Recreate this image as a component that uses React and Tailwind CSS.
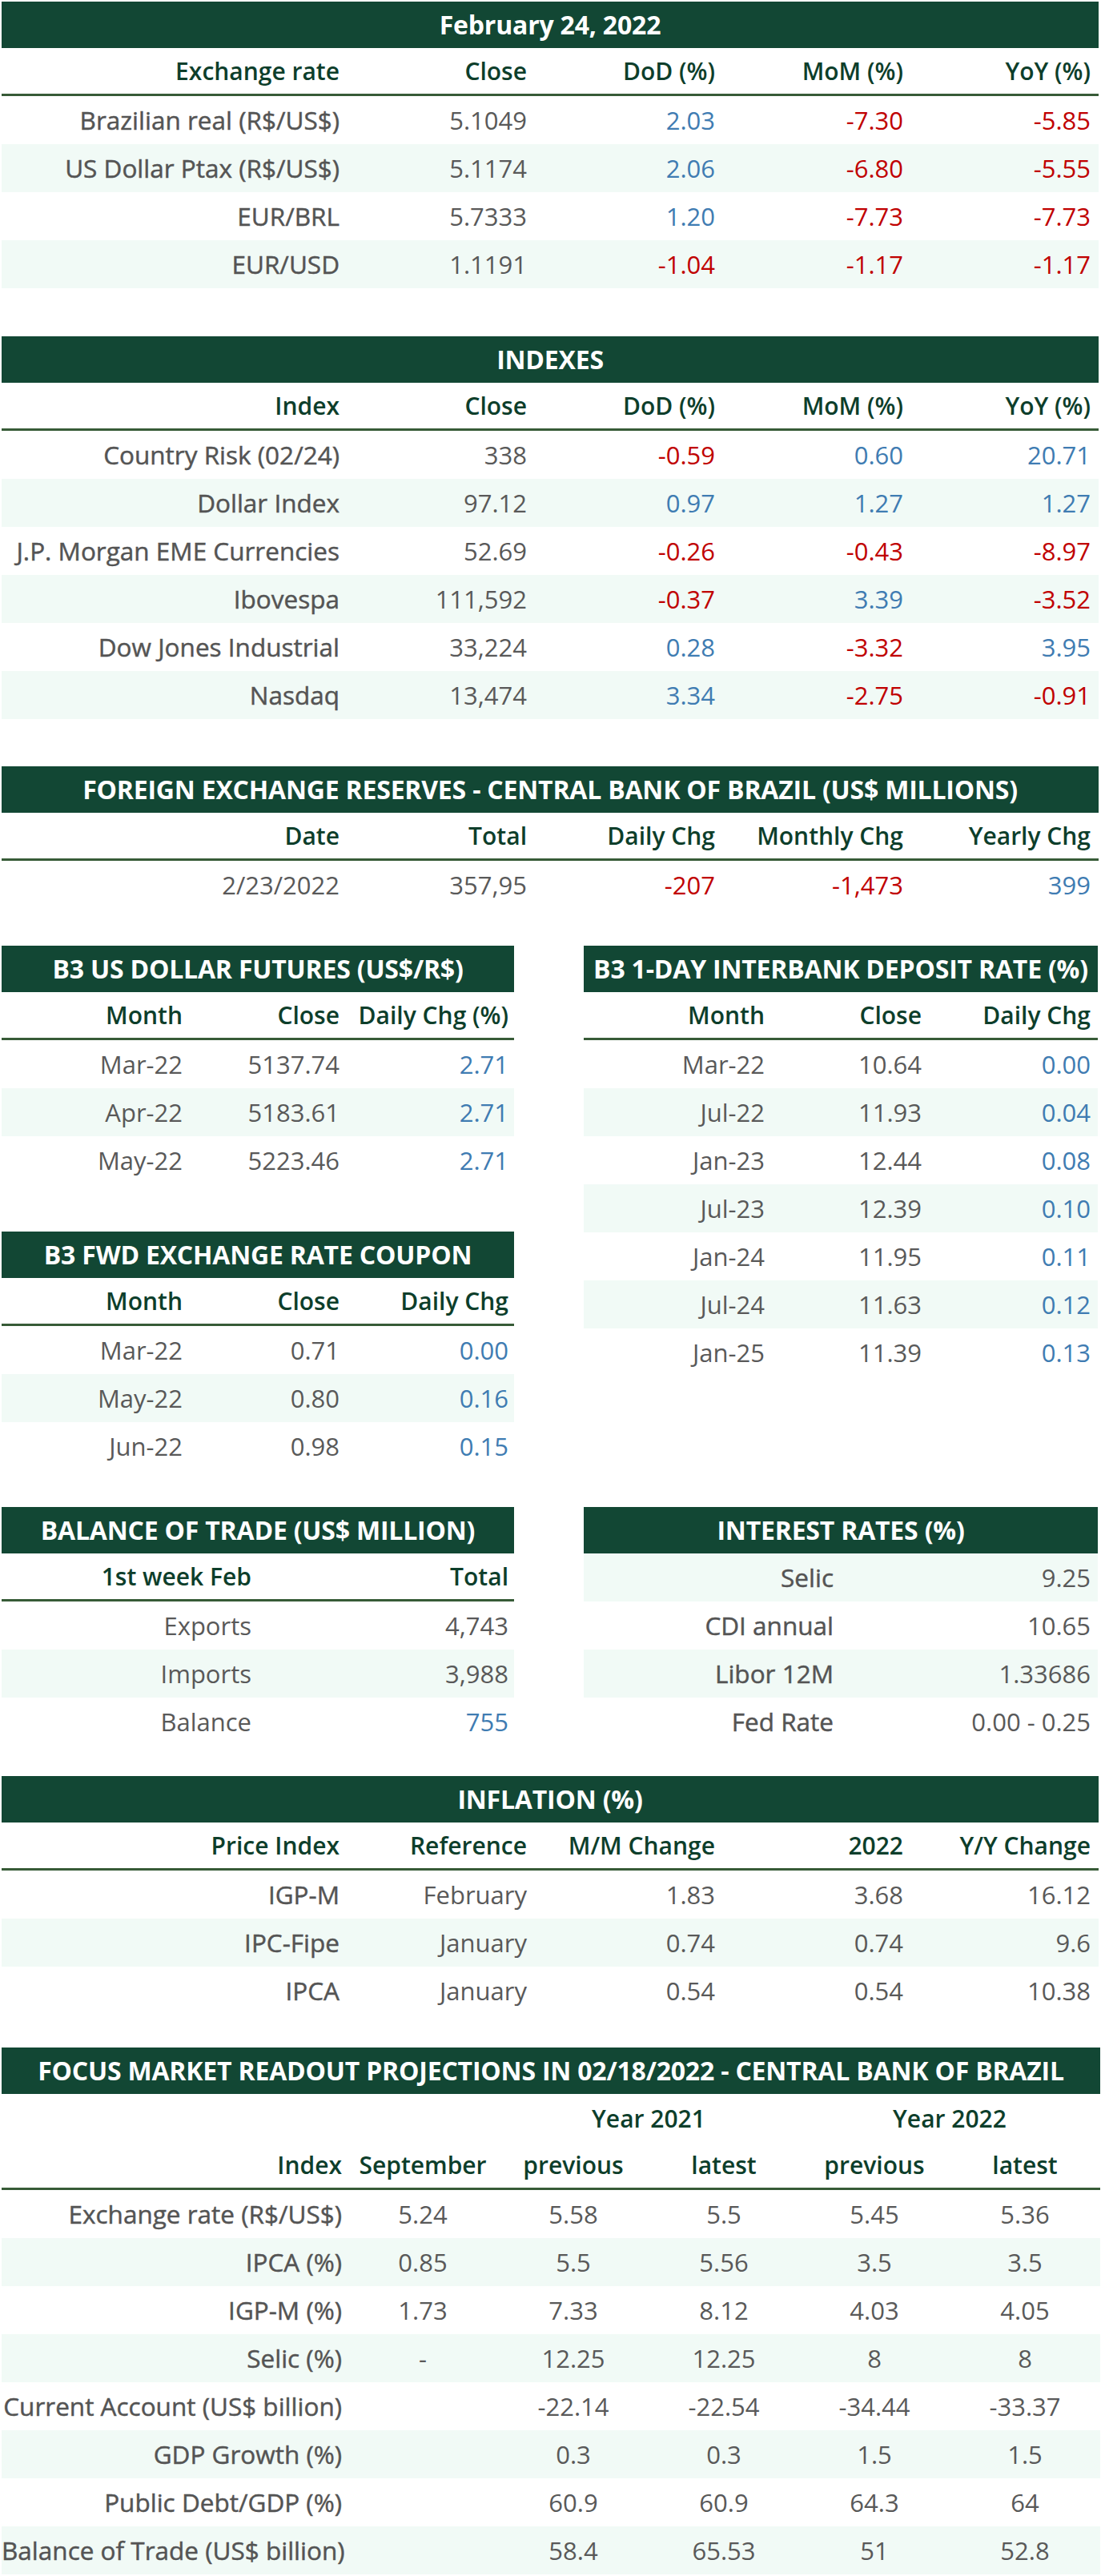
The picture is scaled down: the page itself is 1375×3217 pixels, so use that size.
import React from "react";

const G5 = "grid grid-cols-[432px_234px_235px_235px_234px]";
const G3 = "grid grid-cols-[233px_196px_211px]";
const G2 = "grid grid-cols-[319px_321px]";
const GF = "grid grid-cols-[432px_188px_188px_188px_188px_188px]";

const colorOf = (c) =>
  c === "b" ? "text-[#3f7cb2]" : c === "r" ? "text-[#c00000]" : "text-[#595959]";

function Title({ children }) {
  return (
    <div className="h-[58px] bg-[#124734] flex items-center justify-center text-white font-bold text-[32px] tracking-[-0.2px] whitespace-nowrap">
      {children}
    </div>
  );
}

function Cell({ v, kind, pr, align = "right" }) {
  let text = v;
  let color = null;
  if (Array.isArray(v)) {
    text = v[0];
    color = v[1];
  }
  const alignCls = align === "center" ? "text-center" : "text-right";
  if (kind === "label") {
    return (
      <div className={`${alignCls} ${pr} font-medium text-[31.5px] text-[#545454] [-webkit-text-stroke:0.45px_#545454] whitespace-nowrap`}>
        {text}
      </div>
    );
  }
  if (kind === "label2") {
    return (
      <div className={`${alignCls} ${pr} text-[31px] text-[#595959] whitespace-nowrap`}>{text}</div>
    );
  }
  return (
    <div className={`${alignCls} ${pr} text-[31px] ${colorOf(color)} whitespace-nowrap`}>{text}</div>
  );
}

function HeadRow({ grid, cols, pr, line = true }) {
  return (
    <div
      className={`${grid} h-[60px] items-center ${line ? "border-b-[3px] border-[#375b37]" : ""}`}
    >
      {cols.map((c, i) => (
        <div key={i} className={`text-right ${pr} font-semibold text-[30px] text-[#0d3e2b] whitespace-nowrap`}>
          {c}
        </div>
      ))}
    </div>
  );
}

function DataRows({ grid, rows, pr, kinds, lightFirst = false }) {
  return (
    <div>
      {rows.map((r, i) => {
        const light = lightFirst ? i % 2 === 0 : i % 2 === 1;
        return (
          <div key={i} className={`${grid} h-[60px] items-center ${light ? "bg-[#f1faf6]" : ""}`}>
            {r.map((v, j) => (
              <Cell key={j} v={v} pr={pr} kind={kinds ? kinds[j] : j === 0 ? "label" : "num"} />
            ))}
          </div>
        );
      })}
    </div>
  );
}

const t1 = [
  ["Brazilian real (R$/US$)", "5.1049", ["2.03", "b"], ["-7.30", "r"], ["-5.85", "r"]],
  ["US Dollar Ptax (R$/US$)", "5.1174", ["2.06", "b"], ["-6.80", "r"], ["-5.55", "r"]],
  ["EUR/BRL", "5.7333", ["1.20", "b"], ["-7.73", "r"], ["-7.73", "r"]],
  ["EUR/USD", "1.1191", ["-1.04", "r"], ["-1.17", "r"], ["-1.17", "r"]],
];

const t2 = [
  ["Country Risk (02/24)", "338", ["-0.59", "r"], ["0.60", "b"], ["20.71", "b"]],
  ["Dollar Index", "97.12", ["0.97", "b"], ["1.27", "b"], ["1.27", "b"]],
  ["J.P. Morgan EME Currencies", "52.69", ["-0.26", "r"], ["-0.43", "r"], ["-8.97", "r"]],
  ["Ibovespa", "111,592", ["-0.37", "r"], ["3.39", "b"], ["-3.52", "r"]],
  ["Dow Jones Industrial", "33,224", ["0.28", "b"], ["-3.32", "r"], ["3.95", "b"]],
  ["Nasdaq", "13,474", ["3.34", "b"], ["-2.75", "r"], ["-0.91", "r"]],
];

const t3 = [["2/23/2022", "357,95", ["-207", "r"], ["-1,473", "r"], ["399", "b"]]];

const fut = [
  ["Mar-22", "5137.74", ["2.71", "b"]],
  ["Apr-22", "5183.61", ["2.71", "b"]],
  ["May-22", "5223.46", ["2.71", "b"]],
];

const di = [
  ["Mar-22", "10.64", ["0.00", "b"]],
  ["Jul-22", "11.93", ["0.04", "b"]],
  ["Jan-23", "12.44", ["0.08", "b"]],
  ["Jul-23", "12.39", ["0.10", "b"]],
  ["Jan-24", "11.95", ["0.11", "b"]],
  ["Jul-24", "11.63", ["0.12", "b"]],
  ["Jan-25", "11.39", ["0.13", "b"]],
];

const fwd = [
  ["Mar-22", "0.71", ["0.00", "b"]],
  ["May-22", "0.80", ["0.16", "b"]],
  ["Jun-22", "0.98", ["0.15", "b"]],
];

const bal = [
  ["Exports", "4,743"],
  ["Imports", "3,988"],
  ["Balance", ["755", "b"]],
];

const ir = [
  ["Selic", "9.25"],
  ["CDI annual", "10.65"],
  ["Libor 12M", "1.33686"],
  ["Fed Rate", "0.00 - 0.25"],
];

const infl = [
  ["IGP-M", "February", "1.83", "3.68", "16.12"],
  ["IPC-Fipe", "January", "0.74", "0.74", "9.6"],
  ["IPCA", "January", "0.54", "0.54", "10.38"],
];

const focus = [
  ["Exchange rate (R$/US$)", "5.24", "5.58", "5.5", "5.45", "5.36"],
  ["IPCA (%)", "0.85", "5.5", "5.56", "3.5", "3.5"],
  ["IGP-M (%)", "1.73", "7.33", "8.12", "4.03", "4.05"],
  ["Selic (%)", "-", "12.25", "12.25", "8", "8"],
  ["Current Account (US$ billion)", "", "-22.14", "-22.54", "-34.44", "-33.37"],
  ["GDP Growth (%)", "", "0.3", "0.3", "1.5", "1.5"],
  ["Public Debt/GDP (%)", "", "60.9", "60.9", "64.3", "64"],
  ["Balance of Trade (US$ billion)", "", "58.4", "65.53", "51", "52.8"],
];

export default function App() {
  return (
    <div className="w-[1375px] pl-[2px] pt-[2px] bg-white font-['Open_Sans',sans-serif]">
      <div className="w-[1370px]">
        <Title>February 24, 2022</Title>
        <HeadRow grid={G5} pr="pr-[10px]" cols={["Exchange rate", "Close", "DoD (%)", "MoM (%)", "YoY (%)"]} />
        <DataRows grid={G5} pr="pr-[10px]" rows={t1} />
      </div>

      <div className="w-[1370px] mt-[60px]">
        <Title>INDEXES</Title>
        <HeadRow grid={G5} pr="pr-[10px]" cols={["Index", "Close", "DoD (%)", "MoM (%)", "YoY (%)"]} />
        <DataRows grid={G5} pr="pr-[10px]" rows={t2} />
      </div>

      <div className="w-[1370px] mt-[59px]">
        <Title>FOREIGN EXCHANGE RESERVES - CENTRAL BANK OF BRAZIL (US$ MILLIONS)</Title>
        <HeadRow grid={G5} pr="pr-[10px]" cols={["Date", "Total", "Daily Chg", "Monthly Chg", "Yearly Chg"]} />
        <DataRows grid={G5} pr="pr-[10px]" rows={t3} kinds={["num", "num", "num", "num", "num"]} />
      </div>

      <div className="flex items-start gap-[87px] mt-[46px]">
        <div className="w-[640px]">
          <Title>B3 US DOLLAR FUTURES (US$/R$)</Title>
          <HeadRow grid={G3} pr="pr-[7px]" cols={["Month", "Close", "Daily Chg (%)"]} />
          <DataRows grid={G3} pr="pr-[7px]" rows={fut} kinds={["num", "num", "num"]} />
          <div className="mt-[59px]">
            <Title>B3 FWD EXCHANGE RATE COUPON</Title>
            <HeadRow grid={G3} pr="pr-[7px]" cols={["Month", "Close", "Daily Chg"]} />
            <DataRows grid={G3} pr="pr-[7px]" rows={fwd} kinds={["num", "num", "num"]} />
          </div>
        </div>
        <div className="w-[642px]">
          <Title>B3 1-DAY INTERBANK DEPOSIT RATE (%)</Title>
          <HeadRow grid={G3} pr="pr-[7px]" cols={["Month", "Close", "Daily Chg"]} />
          <DataRows grid={G3} pr="pr-[7px]" rows={di} kinds={["num", "num", "num"]} />
        </div>
      </div>

      <div className="flex items-start gap-[87px] mt-[46px]">
        <div className="w-[640px]">
          <Title>BALANCE OF TRADE (US$ MILLION)</Title>
          <HeadRow grid={G2} pr="pr-[7px]" cols={["1st week Feb", "Total"]} />
          <DataRows grid={G2} pr="pr-[7px]" rows={bal} kinds={["num", "num"]} />
        </div>
        <div className="w-[642px]">
          <Title>INTEREST RATES (%)</Title>
          <DataRows grid={G2} pr="pr-[7px]" rows={ir} lightFirst kinds={["label", "num"]} />
        </div>
      </div>

      <div className="w-[1370px] mt-[38px]">
        <Title>INFLATION (%)</Title>
        <HeadRow grid={G5} pr="pr-[10px]" cols={["Price Index", "Reference", "M/M Change", "2022", "Y/Y Change"]} />
        <DataRows grid={G5} pr="pr-[10px]" rows={infl} kinds={["label", "label2", "num", "num", "num"]} />
      </div>

      <div className="w-[1372px] mt-[41px]">
        <Title>FOCUS MARKET READOUT PROJECTIONS IN 02/18/2022 - CENTRAL BANK OF BRAZIL</Title>
        <div className={`${GF} h-[60px] items-center`}>
          <div />
          <div />
          <div className="col-span-2 text-center font-semibold text-[30px] text-[#0d3e2b]">Year 2021</div>
          <div className="col-span-2 text-center font-semibold text-[30px] text-[#0d3e2b]">Year 2022</div>
        </div>
        <div className={`${GF} h-[60px] items-center border-b-[3px] border-[#375b37]`}>
          {["Index", "September", "previous", "latest", "previous", "latest"].map((c, i) => (
            <div
              key={i}
              className={`${i === 0 ? "text-right pr-[7px]" : "text-center"} font-semibold text-[30px] text-[#0d3e2b] whitespace-nowrap`}
            >
              {c}
            </div>
          ))}
        </div>
        <div>
          {focus.map((r, i) => (
            <div key={i} className={`${GF} h-[60px] items-center ${i % 2 === 1 ? "bg-[#f1faf6]" : ""}`}>
              {r.map((v, j) =>
                j === 0 ? (
                  <Cell key={j} v={v} pr="pr-[7px]" kind="label" />
                ) : (
                  <Cell key={j} v={v} pr="" kind="num" align="center" />
                )
              )}
            </div>
          ))}
        </div>
      </div>
    </div>
  );
}
